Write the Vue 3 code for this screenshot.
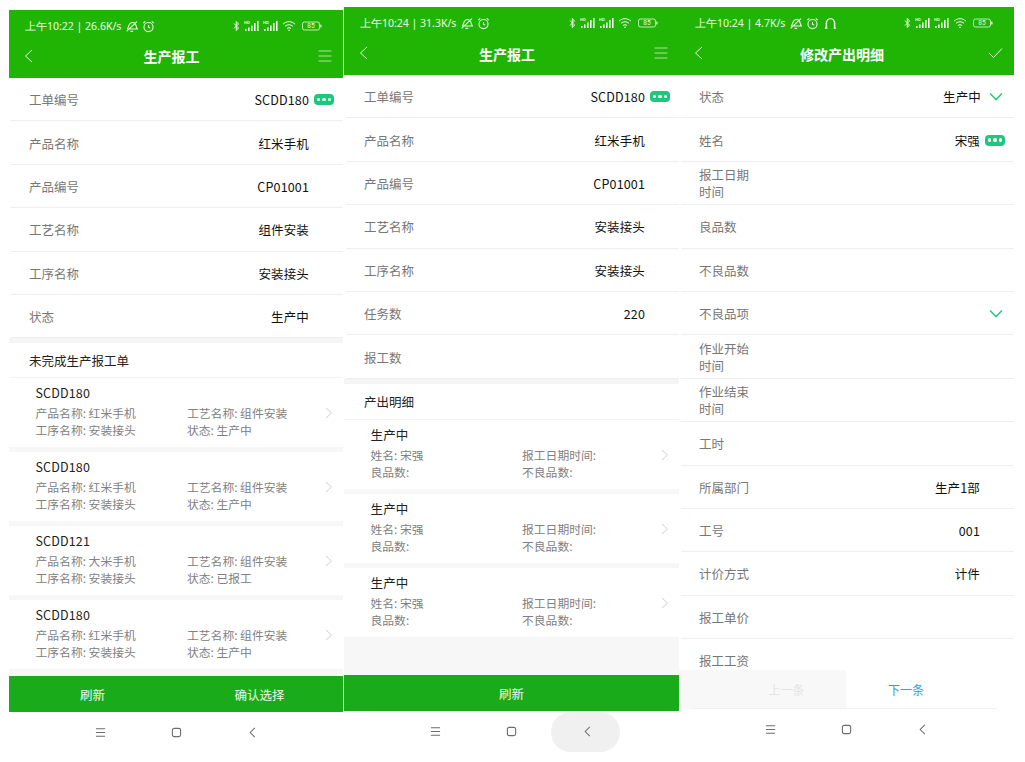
<script setup>
const card = (title, a, b, c, d) => ({ title, a, b, c, d })
const phones = [
  {
    id: 1, time: '上午10:22 | 26.6K/s', bell: false, title: '生产报工', action: 'menu', cls: 'first',
    rows: [
      { l: '工单编号', v: 'SCDD180', more: true },
      { l: '产品名称', v: '红米手机' },
      { l: '产品编号', v: 'CP01001' },
      { l: '工艺名称', v: '组件安装' },
      { l: '工序名称', v: '安装接头' },
      { l: '状态', v: '生产中' }
    ],
    section: '未完成生产报工单',
    cards: [
      card('SCDD180', '产品名称: 红米手机', '工艺名称: 组件安装', '工序名称: 安装接头', '状态: 生产中'),
      card('SCDD180', '产品名称: 红米手机', '工艺名称: 组件安装', '工序名称: 安装接头', '状态: 生产中'),
      card('SCDD121', '产品名称: 大米手机', '工艺名称: 组件安装', '工序名称: 安装接头', '状态: 已报工'),
      card('SCDD180', '产品名称: 红米手机', '工艺名称: 组件安装', '工序名称: 安装接头', '状态: 生产中')
    ],
    buttons: ['刷新', '确认选择']
  },
  {
    id: 2, time: '上午10:24 | 31.3K/s', bell: false, title: '生产报工', action: 'menu', cls: 'second', pill: true,
    rows: [
      { l: '工单编号', v: 'SCDD180', more: true },
      { l: '产品名称', v: '红米手机' },
      { l: '产品编号', v: 'CP01001' },
      { l: '工艺名称', v: '安装接头' },
      { l: '工序名称', v: '安装接头' },
      { l: '任务数', v: '220' },
      { l: '报工数', v: '' }
    ],
    section: '产出明细',
    cards: [
      card('生产中', '姓名: 宋强', '报工日期时间:', '良品数:', '不良品数:'),
      card('生产中', '姓名: 宋强', '报工日期时间:', '良品数:', '不良品数:'),
      card('生产中', '姓名: 宋强', '报工日期时间:', '良品数:', '不良品数:')
    ],
    buttons: ['刷新']
  },
  {
    id: 3, time: '上午10:24 | 4.7K/s', bell: true, title: '修改产出明细', action: 'check', cls: 'third',
    rows: [
      { l: '状态', v: '生产中', chev: true },
      { l: '姓名', v: '宋强', more: true },
      { l: '报工日期\n时间', v: '' },
      { l: '良品数', v: '' },
      { l: '不良品数', v: '' },
      { l: '不良品项', v: '', chev: true },
      { l: '作业开始\n时间', v: '' },
      { l: '作业结束\n时间', v: '' },
      { l: '工时', v: '' },
      { l: '所属部门', v: '生产1部' },
      { l: '工号', v: '001' },
      { l: '计价方式', v: '计件' },
      { l: '报工单价', v: '' },
      { l: '报工工资', v: '' }
    ],
    cards: [],
    buttons: []
  }
]
</script>

<template>
  <main class="page">
    <section v-for="p in phones" :key="p.id" class="phone" :class="p.cls">
      <header class="head">
        <div class="status">
          <span class="clock">{{ p.time }}</span>
          <svg class="st-icon" viewBox="0 0 12 12" fill="none" stroke="#e8f7e3" stroke-width="1">
            <path d="M2 8.500C3 8 3 5 4.500 3.500c2-2 5-1.200 5.500 1 .4 1.800.6 3 1.500 3.800H3M1.500 10.500 11 1.500M5 10.500h2.500" />
          </svg>
          <svg class="st-icon" viewBox="0 0 12 12" fill="none" stroke="#e8f7e3" stroke-width="1">
            <circle cx="6" cy="6.500" r="4.200" />
            <path d="M6 4.500v2.200l1.500.8M1.200 2.800 3 1.200M10.800 2.800 9 1.200" />
          </svg>
          <svg v-if="p.bell" class="st-icon bell" viewBox="0 0 12 12" fill="none" stroke="#f0faec" stroke-width="1.300">
            <path d="M2.200 10V5.800a3.800 4.300 0 0 1 7.600 0V10M.8 10.300h2.400M8.800 10.300h2.400" />
          </svg>
          <span class="grow"></span>
          <svg class="bt" viewBox="0 0 7 12" fill="none" stroke="#f0faec" stroke-width="1">
            <path d="M1 3.500 5.500 8 3.300 10.500V1.500L5.500 4 1 8.500" />
          </svg>
          <svg v-for="n in 2" :key="n" class="sig" viewBox="0 0 16 12">
            <text x="0" y="4" font-size="4" font-family="Liberation Sans, sans-serif" font-weight="700" fill="#e8f7e3">HD</text>
            <g fill="#f0faec">
              <rect x="1" y="9" width="1.600" height="2" />
              <rect x="4" y="7.500" width="1.600" height="3.500" />
              <rect x="7" y="5.500" width="1.600" height="5.500" />
              <rect x="10" y="3" width="1.600" height="8" />
              <rect x="13" y="1" width="1.600" height="10" />
            </g>
          </svg>
          <svg class="wifi" viewBox="0 0 14 12" fill="none" stroke="#f0faec" stroke-width="1">
            <path d="M1 4.200C4.500.8 9.500.8 13 4.200M3 6.400c2.400-2.200 5.600-2.200 8 0M5 8.500c1.200-1 2.800-1 4 0" />
            <circle cx="7" cy="10.300" r=".8" fill="#f0faec" stroke="none" />
          </svg>
          <svg class="batt" viewBox="0 0 20 10">
            <rect x=".5" y="1" width="17" height="8" rx="2" fill="none" stroke="#e8f7e3" stroke-width=".8" />
            <rect x="18.200" y="3.500" width="1.300" height="3" rx=".6" fill="#e8f7e3" />
            <text x="9" y="7.400" text-anchor="middle" font-size="6.500" font-family="Roboto, sans-serif" fill="#e8f7e3">85</text>
          </svg>
        </div>
        <div class="nav">
          <svg class="back" viewBox="0 0 9 14" fill="none" stroke="#e4f6df" stroke-width="1">
            <path d="M8 1 1.500 7 8 13" />
          </svg>
          <h1 class="title">{{ p.title }}</h1>
          <svg v-if="p.action === 'menu'" class="action" viewBox="0 0 14 12" fill="none" stroke="#cfeec6" stroke-width=".8">
            <path d="M.5 1h13M.5 6h13M.5 11h13" />
          </svg>
          <svg v-else class="action check" viewBox="0 0 15 12" fill="none" stroke="#eaf8e6" stroke-width="1">
            <path d="M1 6 5.500 10.500 14 1.500" />
          </svg>
        </div>
      </header>

      <div class="body">
        <div class="form">
          <div v-for="r in p.rows" :key="r.l" class="row">
            <span class="label">{{ r.l }}</span>
            <span class="value">{{ r.v }}</span>
            <span v-if="r.more" class="more"><i></i><i></i><i></i></span>
            <svg v-else-if="r.chev" class="chev" viewBox="0 0 14 9" fill="none" stroke="#2ecb80" stroke-width="1.600">
              <path d="M1 1.500 7 7.500 13 1.500" />
            </svg>
          </div>
        </div>

        <template v-if="p.section">
          <div class="band"></div>
          <h2 class="section">{{ p.section }}</h2>
          <article v-for="(c, i) in p.cards" :key="i" class="card">
            <div class="card-title">{{ c.title }}</div>
            <div class="grid">
              <span>{{ c.a }}</span><span>{{ c.b }}</span>
              <span>{{ c.c }}</span><span>{{ c.d }}</span>
            </div>
            <svg class="go" viewBox="0 0 8 12" fill="none" stroke="#d2d2d2" stroke-width="1">
              <path d="M1 1 6.500 6 1 11" />
            </svg>
          </article>
        </template>

        <div v-if="p.id === 3" class="pager">
          <span class="prev">上一条</span>
          <span class="next">下一条</span>
        </div>
      </div>

      <footer v-if="p.buttons.length" class="actions">
        <button v-for="b in p.buttons" :key="b" class="btn">{{ b }}</button>
      </footer>

      <div class="sysnav">
        <span class="sys">
          <svg class="sys-i" viewBox="0 0 12 10" fill="none" stroke="#6c6c6c" stroke-width="1.100">
            <path d="M1 1h10M1 5h10M1 9h10" />
          </svg>
        </span>
        <span class="sys">
          <svg class="sys-i" viewBox="0 0 12 12" fill="none" stroke="#6c6c6c" stroke-width="1.200">
            <rect x="1.500" y="1.500" width="9" height="9" rx="2" />
          </svg>
        </span>
        <span class="sys">
          <span class="sys-back" :class="{ pressed: p.pill }">
            <svg class="sys-i" viewBox="0 0 9 12" fill="none" stroke="#6c6c6c" stroke-width="1.100">
              <path d="M7 1 2 6 7 11" />
            </svg>
          </span>
        </span>
      </div>
    </section>
  </main>
</template>

<style scoped>
.page {
  display: flex;
  align-items: flex-start;
  width: 1025px;
  height: 762px;
  padding-left: 9px;
  box-sizing: border-box;
  background: #fff;
  overflow: hidden;
  font-family: "Noto Sans CJK SC", "Noto Sans", sans-serif;
}
.phone {
  display: flex;
  flex-direction: column;
  flex: none;
  width: 335px;
  height: 745px;
  margin-top: 7px;
  background: #fff;
  overflow: hidden;
}
.first { width: 334px; margin-top: 10px; margin-right: 1px; height: 743px; }
.third { height: 743px; }
.head {
  flex: none;
  height: 68px;
  background: #20b504;
  color: #fff;
}
.status {
  display: flex;
  align-items: center;
  height: 18px;
  padding: 7px 21px 0 16px;
  gap: 4px;
}
.clock {
  font-size: 10.500px;
  color: #eefaea;
  white-space: nowrap;
  font-family: "Noto Sans", sans-serif;
}
.st-icon { width: 13px; height: 13px; flex: none; }
.bell { margin-left: 1px; }
.grow { flex: 1; }
.bt { width: 7px; height: 12px; margin-right: 1px; flex: none; }
.sig { width: 16px; height: 12px; margin-left: -1px; flex: none; }
.wifi { width: 14px; height: 12px; margin-left: -1px; margin-right: 2px; flex: none; }
.batt { width: 20px; height: 10px; flex: none; }
.nav {
  display: grid;
  grid-template-columns: 1fr auto 1fr;
  align-items: center;
  height: 40px;
  padding: 2px 24px 0 15px;
  box-sizing: border-box;
}
.back { width: 9px; height: 14px; }
.title {
  margin: 0;
  font-size: 14px;
  font-weight: 700;
  line-height: 20px;
}
.second .title, .third .title { margin-top: 1px; }
.action {
  justify-self: end;
  width: 14px;
  height: 12px;
  margin-right: -13px;
}
.check { width: 15px; }
.body {
  position: relative;
  flex: 1;
  min-height: 0;
  background: #f7f7f7;
  overflow: hidden;
}
.form { background: #fff; }
.row {
  display: flex;
  align-items: center;
  height: 43.400px;
  margin-left: 2px;
  padding: 1px 9px 0 18px;
  box-sizing: border-box;
  border-bottom: 1px solid #eeeeee;
  font-size: 12.500px;
}
.label {
  flex: 1;
  color: #777;
  white-space: pre-line;
  line-height: 17px;
}
.value {
  color: #111;
  margin-right: 25px;
  letter-spacing: .15px;
}
.row:has(.more) .value { margin-right: 5px; }
.row:has(.chev) .value { margin-right: 8px; }
.more {
  display: flex;
  align-items: center;
  justify-content: center;
  gap: 2px;
  width: 20px;
  height: 11px;
  border-radius: 4px;
  background: #1fc77c;
}
.more i {
  width: 3.500px;
  height: 3.500px;
  border-radius: 50%;
  background: #fff;
}
.chev { width: 14px; height: 9px; margin-right: 2px; }
.band { height: 5px; background: #f5f5f5; }
.section {
  margin: 0;
  height: 35px;
  padding-left: 20px;
  background: #fff;
  font-size: 12.500px;
  font-weight: 400;
  line-height: 35px;
  color: #222;
  border-bottom: 1px solid #f3f3f3;
  box-sizing: border-box;
}
.second .section { height: 36px; }
.card {
  position: relative;
  height: 69px;
  margin-bottom: 5px;
  padding: 6px 0 0 26.500px;
  box-sizing: border-box;
  background: #fff;
}
.card-title {
  font-size: 12.500px;
  line-height: 17px;
  letter-spacing: .15px;
  color: #222;
  margin-bottom: 3px;
}
.grid {
  display: grid;
  grid-template-columns: 151.500px 1fr;
  font-size: 11.800px;
  line-height: 17px;
  color: #808080;
}
.go {
  position: absolute;
  right: 10px;
  top: 29px;
  width: 8px;
  height: 12px;
}
.pager {
  position: absolute;
  left: 0;
  right: 0;
  bottom: 0;
  height: 39px;
  display: flex;
  font-size: 12px;
  line-height: 39px;
  text-align: center;
  background: #fff;
}
.pager::after {
  content: "";
  position: absolute;
  left: 14px;
  right: 17px;
  bottom: 0;
  border-bottom: 1px solid #f0f0f0;
}
.prev {
  width: 167px;
  padding-left: 48px;
  box-sizing: border-box;
  background: #f8f8f8;
  color: #e4e4e4;
}
.next {
  width: 120px;
  color: #2a9fe0;
}
.actions {
  flex: none;
  display: flex;
  height: 36px;
  background: #1aab1a;
}
.btn {
  flex: 1;
  border: 0;
  padding: 0;
  background: none;
  color: #eef9ec;
  font: inherit;
  font-size: 12.500px;
}
.sysnav {
  flex: none;
  display: flex;
  justify-content: center;
  align-items: center;
  height: 41px;
  background: #fff;
}
.sys {
  display: flex;
  align-items: center;
  justify-content: center;
  width: 76px;
  height: 41px;
}
.sys-back {
  display: flex;
  align-items: center;
  justify-content: center;
  width: 69px;
  height: 40px;
  box-sizing: border-box;
  border-radius: 20px;
}
.pressed {
  margin-left: -4px;
  padding-left: 3px;
  background: #f0f0f0;
}
.sys-i { width: 11px; height: 11px; }
</style>
